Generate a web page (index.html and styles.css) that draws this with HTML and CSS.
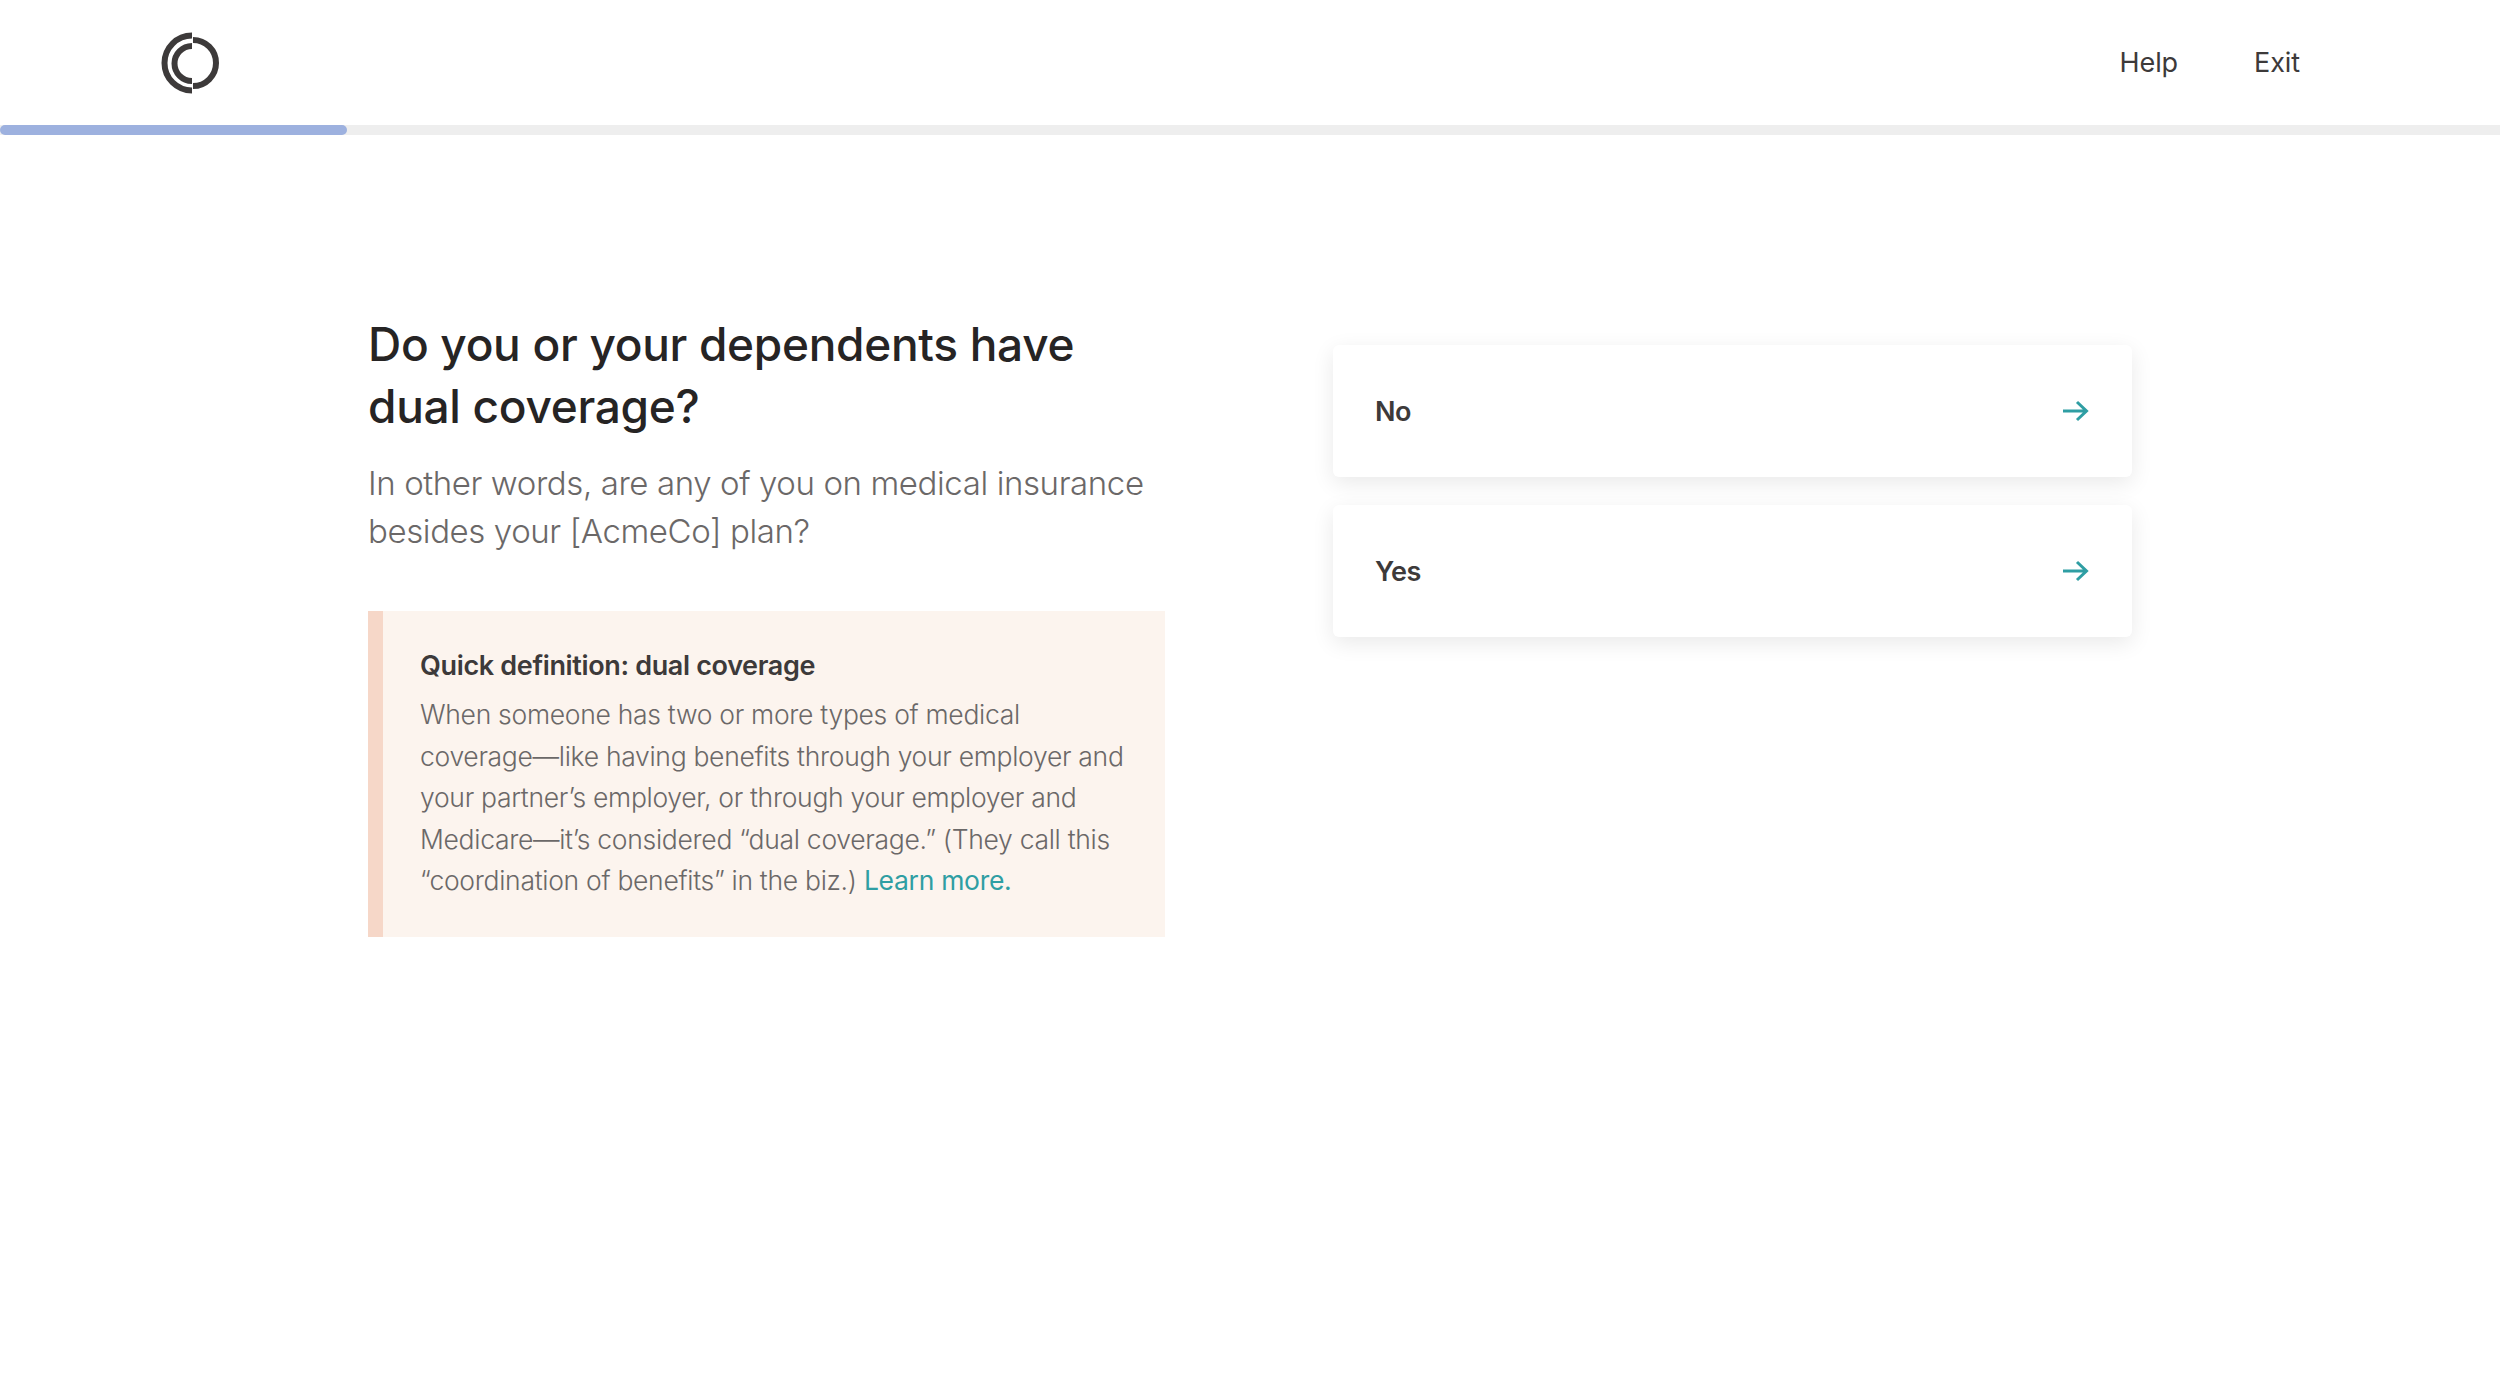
FILE: index.html
```html
<!DOCTYPE html>
<html lang="en">
<head>
<meta charset="utf-8">
<title>Dual coverage</title>
<link rel="stylesheet" href="styles.css">
</head>
<body>
<header class="topbar">
  <svg class="logo" width="64" height="64" viewBox="160 30.5 64 64" fill="none" stroke="#3d3a3a" stroke-width="6">
    <path d="M192 35A27.500 27.500 0 0 0 192 90"/>
    <path d="M192 45.500A17.500 17.500 0 0 0 192 80.500"/>
    <path d="M193 39.500A23 23 0 0 1 193 85.500"/>
  </svg>
  <nav class="nav"><a>Help</a><a>Exit</a></nav>
</header>
<div class="progress"><div class="progress-fill"></div></div>
<main class="main">
  <section class="question">
    <h1>Do you or your dependents have dual coverage?</h1>
    <p class="sub">In other words, are any of you on medical insurance besides your [AcmeCo] plan?</p>
    <aside class="note">
      <h2>Quick definition: dual coverage</h2>
      <p>When someone has two or more types of medical coverage—like having benefits through your employer and your partner’s employer, or through your employer and Medicare—it’s considered “dual coverage.” (They call this “coordination of benefits” in the biz.) <a>Learn more.</a></p>
    </aside>
  </section>
  <section class="options">
    <button class="option"><span>No</span><svg width="28" height="22" viewBox="0 0 28 22" fill="none" stroke="#2f9ea3" stroke-width="3"><path d="M1 11H25M15 2l9.500 9-9.500 9"/></svg></button>
    <button class="option"><span>Yes</span><svg width="28" height="22" viewBox="0 0 28 22" fill="none" stroke="#2f9ea3" stroke-width="3"><path d="M1 11H25M15 2l9.500 9-9.500 9"/></svg></button>
  </section>
</main>
</body>
</html>
```
FILE: styles.css
```css
* { box-sizing: border-box; }
html, body { margin: 0; padding: 0; background: #fff; }
body { font-family: Inter, "Liberation Sans", sans-serif; color: #3d3a3a; height: 1389px; overflow: hidden; }
.topbar { height: 125px; display: flex; align-items: center; justify-content: space-between; padding: 0 200px 0 160px; }
.logo { display: block; }
.nav { display: flex; gap: 76px; font-size: 27px; letter-spacing: -0.1px; }
.progress { height: 10px; background: #eeeeee; }
.progress-fill { width: 347px; height: 10px; background: #9db1df; border-radius: 5px; }
.main { display: flex; padding: 178px 0 0 368px; align-items: flex-start; gap: 168px; }
.question { width: 797px; }
h1 { margin: 0; font-size: 46px; line-height: 62px; font-weight: 500; color: #262424; letter-spacing: -0.3px; }
.sub { margin: 22px 0 0; font-size: 33px; line-height: 48px; font-weight: 300; color: #6b6868; letter-spacing: -0.4px; }
.note { margin-top: 56px; height: 326px; background: #fcf4ee; border-left: 15px solid #f6d7c8; padding: 35px 35px 0 37px; }
.note h2 { margin: 0; font-size: 27px; line-height: 40px; font-weight: 600; color: #3d3a3a; letter-spacing: -0.35px; }
.note p { margin: 8px 0 0; font-size: 26.500px; line-height: 41.500px; font-weight: 300; color: #6b6868; letter-spacing: -0.3px; }
.note a { color: #2f9ea3; font-weight: 400; }
.options { width: 799px; display: flex; flex-direction: column; gap: 28px; padding-top: 32px; }
.option { height: 132px; display: flex; align-items: center; justify-content: space-between; padding: 0 42px; border: 0; background: #fff; border-radius: 6px; box-shadow: 0 6px 22px rgba(0,0,0,.09); font: 600 27px Inter, sans-serif; color: #3d3a3a; letter-spacing: -0.5px; }
```
